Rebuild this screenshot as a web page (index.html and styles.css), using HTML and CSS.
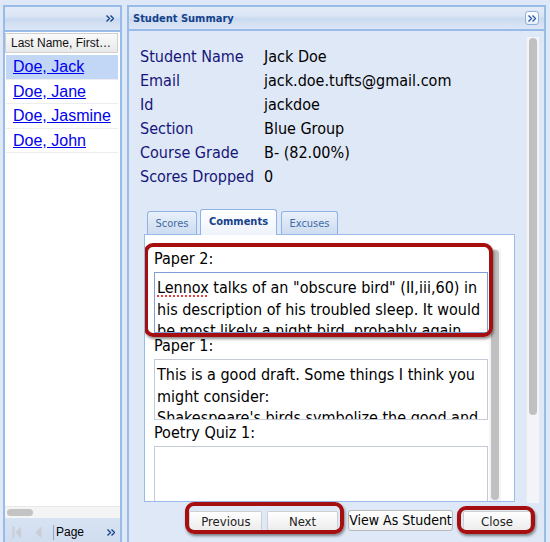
FILE: index.html
```html
<!DOCTYPE html>
<html>
<head>
<meta charset="utf-8">
<link rel="stylesheet" href="styles.css">
</head>
<body>
<div class="app">
  <div class="panel west">
    <div class="phead west-head">
      <svg class="chev" width="8" height="7" viewBox="0 0 8 7"><path d="M0.5 0.5 L3.5 3.5 L0.5 6.5 M4.5 0.5 L7.5 3.5 L4.5 6.5" fill="none" stroke="#15428b" stroke-width="1.4"/></svg>
    </div>
    <div class="west-body">
      <div class="grid">
        <div class="colhead">Last Name, First…</div>
        <div class="row sel"><a href="#">Doe, Jack</a></div>
        <div class="row"><a href="#">Doe, Jane</a></div>
        <div class="row"><a href="#">Doe, Jasmine</a></div>
        <div class="row"><a href="#">Doe, John</a></div>
      </div>
      <div class="hscroll"><div class="hthumb"></div></div>
    </div>
    <div class="pager">
      <svg width="10" height="13" viewBox="0 0 10 13"><rect x="0.5" y="0.5" width="2" height="12" fill="#c9ced6"/><path d="M9 0.5 L3.5 6.5 L9 12.5 Z" fill="#c9ced6"/></svg>
      <svg class="prev" width="7" height="13" viewBox="0 0 7 13"><path d="M6.5 0.5 L0.5 6.5 L6.5 12.5 Z" fill="#c9ced6"/></svg>
      <span class="sep"></span>
      <span class="page">Page</span>
      <svg class="chev2" width="8" height="7" viewBox="0 0 8 7"><path d="M0.5 0.5 L3.5 3.5 L0.5 6.5 M4.5 0.5 L7.5 3.5 L4.5 6.5" fill="none" stroke="#15428b" stroke-width="1.4"/></svg>
    </div>
  </div>
  <div class="panel main">
    <div class="phead main-head">
      <span class="title">Student Summary</span>
      <span class="toolbtn"><svg width="8" height="7" viewBox="0 0 8 7"><path d="M0.5 0.5 L3.5 3.5 L0.5 6.5 M4.5 0.5 L7.5 3.5 L4.5 6.5" fill="none" stroke="#2d5ea8" stroke-width="1.4"/></svg></span>
    </div>
    <div class="main-body">
      <div class="scrollarea">
        <div class="content">
          <div class="fields">
            <div class="flabel">Student Name</div><div class="fval">Jack Doe</div>
            <div class="flabel">Email</div><div class="fval">jack.doe.tufts@gmail.com</div>
            <div class="flabel">Id</div><div class="fval">jackdoe</div>
            <div class="flabel">Section</div><div class="fval">Blue Group</div>
            <div class="flabel">Course Grade</div><div class="fval">B- (82.00%)</div>
            <div class="flabel">Scores Dropped</div><div class="fval">0</div>
          </div>
          <div class="tabpanel">
            <div class="tabstrip">
              <span class="tab t1">Scores</span>
              <span class="tab t2 active">Comments</span>
              <span class="tab t3">Excuses</span>
            </div>
            <div class="tabbody">
              <div class="comments">
                <div class="field mark-wrap">
                  <div class="clabel">Paper 2:</div>
                  <div class="cbox focus"><span class="spell">Lennox</span> talks of an "obscure bird" (II,iii,60) in his description of his troubled sleep. It would be most likely a night bird, probably again</div>
                  <span class="mark mark-paper"></span>
                </div>
                <div class="field">
                  <div class="clabel">Paper 1:</div>
                  <div class="cbox">This is a good draft. Some things I think you might consider:<br>Shakespeare's birds symbolize the good and</div>
                </div>
                <div class="field">
                  <div class="clabel">Poetry Quiz 1:</div>
                  <div class="cbox"></div>
                </div>
              </div>
              <div class="iscroll"><div class="ithumb"></div></div>
            </div>
          </div>
        </div>
        <div class="vscroll"><div class="vthumb"></div></div>
      </div>
      <div class="buttons">
        <span class="mark-wrap pair">
          <span class="btn b-prev">Previous</span>
          <span class="btn b-next">Next</span>
          <span class="mark mark-pair"></span>
        </span>
        <span class="btn native">View As Student</span>
        <span class="mark-wrap">
          <span class="btn b-close">Close</span>
          <span class="mark mark-close"></span>
        </span>
      </div>
    </div>
  </div>
</div>
</body>
</html>
```
FILE: styles.css
```css
html, body {
  margin: 0;
  padding: 0;
}
body {
  width: 550px;
  height: 542px;
  overflow: hidden;
  background: #dfe8f6;
  font-family: "DejaVu Sans Condensed", "DejaVu Sans", sans-serif;
  font-stretch: condensed;
}
.app {
  display: flex;
  padding: 5px 0 0 3px;
  gap: 5px;
  height: 560px;
}
.panel {
  border: 2px solid #99bbe8;
  display: flex;
  flex-direction: column;
  box-sizing: border-box;
  height: 560px;
}
.west { width: 119px; }
.main { width: 419px; }
.phead {
  height: 24px;
  border-bottom: 2px solid #99bbe8;
  background: linear-gradient(#e3ebf7 0%, #dae5f5 40%, #c9d9f0 55%, #d3e0f3 70%, #dbe6f6 100%);
  display: flex;
  align-items: center;
  flex: none;
}
.west-head { justify-content: flex-end; padding-right: 6px; height: 23px; }
.chev { display: block; }

.west-body {
  background: #fff;
  height: 486px;
  display: flex;
  flex-direction: column;
  justify-content: space-between;
  flex: none;
}
.grid { padding-top: 1px; }
.colhead {
  font-family: "Liberation Sans", Arial, sans-serif;
  font-size: 12px;
  height: 18px;
  line-height: 18px;
  padding-left: 5px;
  margin-right: 2px;
  border: 1px solid #d0d0d0;
  background: linear-gradient(#fafafa, #e9e9e9);
  color: #111;
  white-space: nowrap;
  overflow: hidden;
}
.row {
  height: 23.5px;
  line-height: 23.5px;
  border-bottom: 1px solid #ededed;
  margin: 0 2px 0 1px;
  padding-left: 7px;
  font-family: "Liberation Sans", Arial, sans-serif;
  font-size: 16px;
}
.row.sel { background: #c2d6f6; margin-top: 2px; }
.row a { color: #0000ee; text-decoration: underline; }
.hscroll {
  height: 11px;
  background: #f4f4f4;
  border-top: 1px solid #e8e8e8;
  display: flex;
  align-items: center;
}
.hthumb {
  width: 26px;
  height: 7px;
  margin-left: 2px;
  border-radius: 4px;
  background: #c3c3c3;
}
.pager {
  height: 28px;
  background: linear-gradient(#d7e3f3, #cfdcee);
  display: flex;
  align-items: center;
  padding-left: 7px;
  font-family: "Liberation Sans", Arial, sans-serif;
  font-size: 12px;
}
.pager svg { display: block; }
.prev { margin-left: 13px; }
.sep {
  width: 1px;
  height: 15px;
  background: #8ba5cc;
  margin-left: 11px;
}
.page { margin-left: 2px; color: #000; }
.chev2 { margin-left: 23px; }

.main-head { justify-content: space-between; padding: 0 5px 0 4px; height: 22px; }
.title {
  font-weight: bold;
  font-size: 11px;
  color: #15428b;
}
.toolbtn {
  width: 12px;
  height: 12px;
  border: 1px solid #8fb0de;
  border-radius: 3px;
  background: linear-gradient(#ffffff, #e8effa);
  display: flex;
  align-items: center;
  justify-content: center;
}
.toolbtn svg { display: block; }

.main-body {
  flex: 1;
  display: flex;
  flex-direction: column;
}
.scrollarea {
  height: 472px;
  display: flex;
  flex: none;
}
.content {
  flex: 1;
  padding-top: 14px;
}
.fields {
  display: grid;
  grid-template-columns: 124px auto;
  padding-left: 11px;
  font-size: 16px;
  line-height: 24px;
}
.flabel { color: #15157a; }
.fval { color: #000; }
.vscroll {
  width: 12px;
  margin: 6px 4px 0 0;
  background: #f2f4f8;
  border-left: 1px solid #e6e9ef;
  border-right: 1px solid #e6e9ef;
}
.vthumb {
  width: 8px;
  margin: 1px 0 0 2px;
  height: 377px;
  border-radius: 4px;
  background: #c0c0c0;
}
.tabpanel {
  margin: 20px 11px 0 15px;
}
.tabstrip {
  display: flex;
  align-items: flex-end;
  height: 25px;
  padding-left: 3px;
  border-bottom: 1px solid #99bbe8;
  font-size: 11px;
}
.tab {
  height: 23px;
  line-height: 23px;
  box-sizing: border-box;
  border: 1px solid #8db2e3;
  border-bottom: none;
  border-radius: 3px 3px 0 0;
  background: linear-gradient(#e9f0fa, #cddcf0);
  color: #416aa3;
  text-align: center;
  margin-right: 3px;
  margin-bottom: 0;
}
.t1 { width: 50px; }
.t2 { width: 77px; margin-right: 4px; }
.t3 { width: 57px; }
.tab.active {
  height: 26px;
  line-height: 24px;
  margin-bottom: -1px;
  background: linear-gradient(#ffffff, #eef3fb);
  color: #15428b;
  font-weight: bold;
}
.tabbody {
  height: 267px;
  background: #fff;
  border: 1px solid #99bbe8;
  border-top: none;
  display: flex;
  overflow: hidden;
  box-sizing: border-box;
}
.comments {
  width: 334px;
  padding: 11px 0 0 9px;
  flex: none;
}
.field { position: relative; }
.clabel {
  height: 26px;
  line-height: 26px;
  font-size: 16px;
  color: #000;
}
.cbox {
  height: 61px;
  box-sizing: border-box;
  border: 1px solid #c4cad8;
  padding: 4px 2px 0 2px;
  font-size: 16px;
  line-height: 21.5px;
  overflow: hidden;
  color: #000;
}
.cbox.focus { border-color: #7d9fd6; }
.spell {
  text-decoration: underline dotted #e00000;
  text-underline-offset: 3px;
}
.iscroll {
  width: 12px;
  margin-top: 14px;
  margin-left: 1px;
  background: #f4f4f4;
  flex: none;
}
.ithumb {
  width: 8px;
  height: 250px;
  margin: 1px 0 0 2px;
  border-radius: 4px;
  background: #c0c0c0;
}

.buttons {
  display: flex;
  justify-content: flex-end;
  align-items: center;
  padding: 7px 13px 0 0;
  gap: 10px;
}
.pair { display: flex; gap: 8px; }
.btn {
  display: inline-block;
  box-sizing: border-box;
  height: 20px;
  line-height: 19px;
  font-size: 13px;
  text-align: center;
  color: #222;
  border: 1px solid #cfcfcf;
  border-radius: 2px;
  background: linear-gradient(#ffffff, #ececec);
  border-bottom: 1px dotted #b8b8b8;
}
.b-prev { width: 73px; }
.b-next { width: 71px; }
.b-close { width: 68px; }
.btn.native {
  width: 105px;
  height: 21px;
  font-size: 14px;
  line-height: 19px;
  color: #000;
  border: 1px solid #b9b9b9;
  border-radius: 3px;
  background: linear-gradient(#ffffff, #f0f0f0);
}
.mark-wrap { position: relative; display: inline-block; }
.mark {
  position: absolute;
  border: 4px solid #a50f0f;
  border-radius: 9px;
  box-shadow: 1px 2px 3px rgba(0,0,0,0.45);
  pointer-events: none;
}
.mark-paper { left: -10px; top: -3px; right: -5px; bottom: -4px; }
.field.mark-wrap { display: block; }
.mark-pair { left: -4px; top: -9px; right: -6px; bottom: -3px; }
.mark-close { left: -6px; top: -5px; right: -4px; bottom: -3px; }
```
